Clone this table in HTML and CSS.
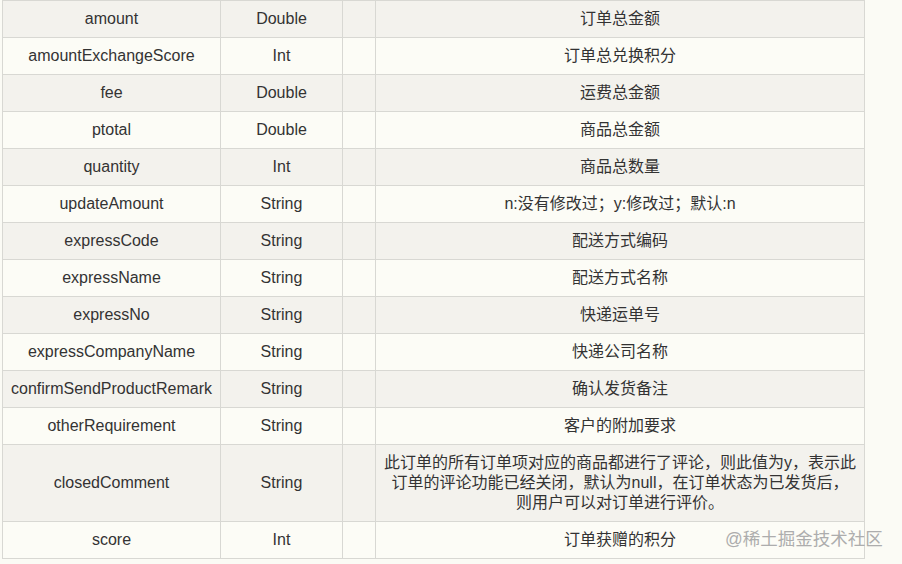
FILE: index.html
```html
<!DOCTYPE html>
<html lang="zh-CN">
<head>
<meta charset="utf-8">
<title>订单字段</title>
<link rel="stylesheet" href="styles.css">
</head>
<body>
<div class="page">
<table class="fields">
<colgroup>
<col class="c-name"><col class="c-type"><col class="c-empty"><col class="c-desc">
</colgroup>
<tbody>
<tr><td>amount</td><td>Double</td><td></td><td>订单总金额</td></tr>
<tr><td>amountExchangeScore</td><td>Int</td><td></td><td>订单总兑换积分</td></tr>
<tr><td>fee</td><td>Double</td><td></td><td>运费总金额</td></tr>
<tr><td>ptotal</td><td>Double</td><td></td><td>商品总金额</td></tr>
<tr><td>quantity</td><td>Int</td><td></td><td>商品总数量</td></tr>
<tr><td>updateAmount</td><td>String</td><td></td><td>n:没有修改过；y:修改过；默认:n</td></tr>
<tr><td>expressCode</td><td>String</td><td></td><td>配送方式编码</td></tr>
<tr><td>expressName</td><td>String</td><td></td><td>配送方式名称</td></tr>
<tr><td>expressNo</td><td>String</td><td></td><td>快递运单号</td></tr>
<tr><td>expressCompanyName</td><td>String</td><td></td><td>快递公司名称</td></tr>
<tr><td>confirmSendProductRemark</td><td>String</td><td></td><td>确认发货备注</td></tr>
<tr><td>otherRequirement</td><td>String</td><td></td><td>客户的附加要求</td></tr>
<tr><td>closedComment</td><td>String</td><td></td><td>此订单的所有订单项对应的商品都进行了评论，则此值为y，表示此<br>订单的评论功能已经关闭，默认为null，在订单状态为已发货后，<br>则用户可以对订单进行评价。</td></tr>
<tr><td>score</td><td>Int</td><td></td><td>订单获赠的积分</td></tr>
</tbody>
</table>
<div class="watermark">@稀土掘金技术社区</div>
</div>
</body>
</html>
```
FILE: styles.css
```css
html, body {
  margin: 0;
  padding: 0;
  background: #fbfbf5;
}
.page {
  position: relative;
  width: 902px;
  height: 564px;
  padding: 0 0 0 2px;
  box-sizing: border-box;
  font-family: "Liberation Sans", "Noto Sans CJK SC", sans-serif;
  color: #333333;
}
.fields {
  border-collapse: collapse;
  table-layout: fixed;
  width: 862px;
  font-size: 16px;
  line-height: 20px;
}
.c-name { width: 218px; }
.c-type { width: 122px; }
.c-empty { width: 33px; }
.c-desc { width: 489px; }
.fields td {
  border: 1px solid #d8d8d3;
  padding: 8px 8px;
  text-align: center;
  vertical-align: middle;
  white-space: nowrap;
}
.fields tr:nth-child(odd) td {
  background: #f3f2ed;
}
.fields tr:nth-child(even) td {
  background: #fcfcf6;
}
.watermark {
  position: absolute;
  left: 725px;
  top: 527px;
  font-size: 17.5px;
  line-height: 24px;
  color: #adadad;
}
```
